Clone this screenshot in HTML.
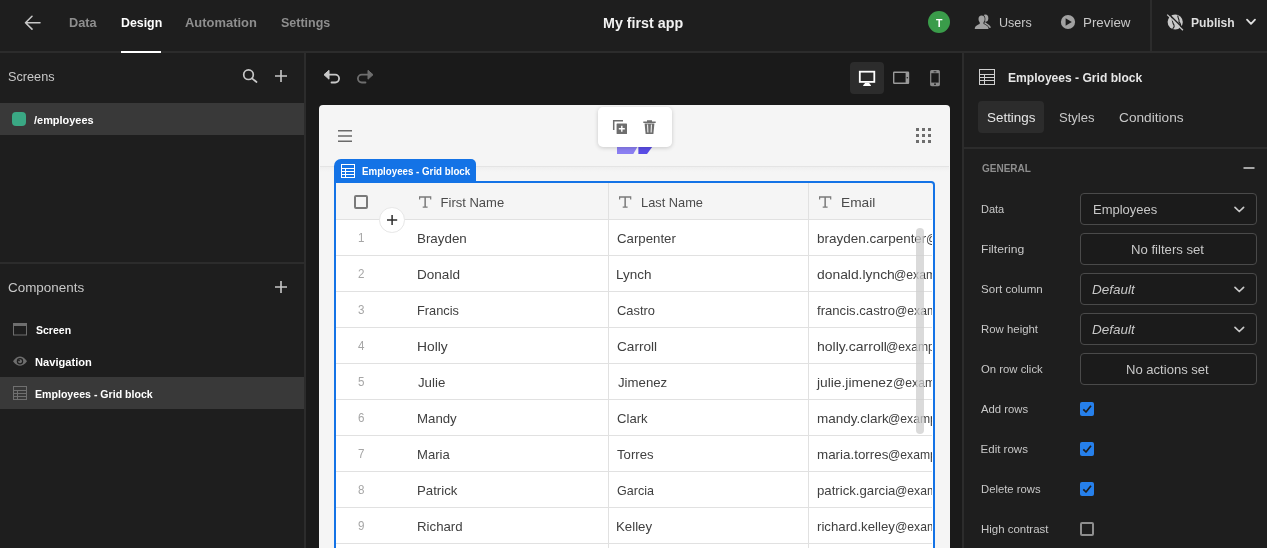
<!DOCTYPE html>
<html lang="en"><head><meta charset="utf-8"><title>My first app</title>
<style>
html,body{margin:0;padding:0;}
body{width:1267px;height:548px;overflow:hidden;background:#1a1a1a;font-family:"Liberation Sans",sans-serif;position:relative;}
div,span,svg{position:absolute;box-sizing:border-box;}
.t{white-space:pre;line-height:20px;height:20px;transform-origin:0 50%;display:block;}
#top{left:0;top:0;width:1267px;height:53px;background:#1e1e1e;border-bottom:2px solid #2c2c2c;}
#left{left:0;top:53px;width:306px;height:495px;background:#1e1e1e;border-right:2px solid #2c2c2c;}
#right{left:962px;top:53px;width:305px;height:495px;background:#1e1e1e;border-left:2px solid #2c2c2c;}
.hl{background:#393939;}
.sep{background:#2c2c2c;}
#preview{left:319px;top:105px;width:631px;height:460px;background:#f5f5f5;border-radius:4px 4px 0 0;overflow:hidden;}
.inp{left:1080px;width:177px;height:32px;border:1px solid #4a4a4a;border-radius:4px;background:#1b1b1b;}
.cb{left:1080px;width:14px;height:14px;border-radius:2px;}
.cb.on{background:#2680eb;}
.cb.off{border:2px solid #8e8e8e;}
.rowline{left:0;width:597px;height:1px;background:#e1e1e1;}
.colline{top:0;width:1px;height:400px;background:#e1e1e1;}
#texts,#grid{will-change:transform;}
#texts{left:0;top:0;width:1267px;height:548px;}

</style></head>
<body>
<div id="top"></div>
<div class="sep" style="left:1150px;top:0;width:2px;height:51px"></div>
<div style="left:121px;top:51px;width:40px;height:2px;background:#fff"></div>
<div id="left"></div>
<div class="hl" style="left:0;top:103px;width:304px;height:32px"></div>
<div style="left:12px;top:112px;width:14px;height:14px;border-radius:4px;background:#3aa884"></div>
<div class="sep" style="left:0;top:262px;width:304px;height:2px"></div>
<div class="hl" style="left:0;top:377px;width:304px;height:32px"></div>
<div id="right"></div>
<div style="left:978px;top:101px;width:66px;height:32px;border-radius:4px;background:#2c2c2c"></div>
<div class="sep" style="left:964px;top:147px;width:303px;height:2px"></div>
<div class="inp" style="top:193px"></div>
<div class="inp" style="top:233px"></div>
<div class="inp" style="top:273px"></div>
<div class="inp" style="top:313px"></div>
<div class="inp" style="top:353px"></div>
<div class="cb on" style="top:402px"></div>
<div class="cb on" style="top:442px"></div>
<div class="cb on" style="top:482px"></div>
<div class="cb off" style="top:522px"></div>
<div style="left:850px;top:62px;width:34px;height:32px;border-radius:4px;background:#2c2c2c"></div>
<div id="preview">
  <div style="left:1px;top:61px;width:629px;height:1px;background:#e4e4e4"></div>
  <div style="left:1px;top:62px;width:629px;height:5px;background:linear-gradient(#efefef,#f5f5f5)"></div>
</div>
<!-- grid -->
<div style="left:336px;top:183px;width:597px;height:36px;background:#f5f5f5"></div>
<div style="left:336px;top:219px;width:597px;height:340px;background:#fff"></div>
<div id="grid" style="left:336px;top:183px;width:596px;height:380px;overflow:hidden;background:#fff">
  <div style="left:0;top:0;width:597px;height:36px;background:#f5f5f5"></div>
  <div class="rowline" style="top:36px"></div>
  <div class="rowline" style="top:72px"></div>
  <div class="rowline" style="top:108px"></div>
  <div class="rowline" style="top:144px"></div>
  <div class="rowline" style="top:180px"></div>
  <div class="rowline" style="top:216px"></div>
  <div class="rowline" style="top:252px"></div>
  <div class="rowline" style="top:288px"></div>
  <div class="rowline" style="top:324px"></div>
  <div class="rowline" style="top:360px"></div>
  <div class="colline" style="left:272px"></div>
  <div class="colline" style="left:472px"></div>
<span class="t" style="left:21.83px;top:45.20px;font-size:12.5px;color:#a6a6a6;transform:scaleX(0.9300);">1</span>
<span class="t" style="left:80.57px;top:46.00px;font-size:13px;color:#404040;transform:scaleX(1.0280);">Brayden</span>
<span class="t" style="left:280.74px;top:46.00px;font-size:13px;color:#404040;transform:scaleX(1.0175);">Carpenter</span>
<span class="t" style="left:480.72px;top:46.00px;font-size:13px;color:#404040;transform:scaleX(1.0364);">brayden.carpenter</span>
<span class="t" style="left:589.77px;top:46.00px;font-size:13px;color:#404040;transform:scaleX(0.9350);">@example.com</span>
<span class="t" style="left:22.06px;top:81.20px;font-size:12.5px;color:#a6a6a6;transform:scaleX(0.9300);">2</span>
<span class="t" style="left:80.56px;top:82.00px;font-size:13px;color:#404040;transform:scaleX(1.0420);">Donald</span>
<span class="t" style="left:280.46px;top:82.00px;font-size:13px;color:#404040;transform:scaleX(1.0369);">Lynch</span>
<span class="t" style="left:480.97px;top:82.00px;font-size:13px;color:#404040;transform:scaleX(1.0662);">donald.lynch</span>
<span class="t" style="left:557.77px;top:82.00px;font-size:13px;color:#404040;transform:scaleX(0.9350);">@example.com</span>
<span class="t" style="left:21.94px;top:117.20px;font-size:12.5px;color:#a6a6a6;transform:scaleX(0.9300);">3</span>
<span class="t" style="left:80.62px;top:118.00px;font-size:13px;color:#404040;transform:scaleX(0.9842);">Francis</span>
<span class="t" style="left:280.76px;top:118.00px;font-size:13px;color:#404040;transform:scaleX(0.9919);">Castro</span>
<span class="t" style="left:481.25px;top:118.00px;font-size:13px;color:#404040;transform:scaleX(1.0092);">francis.castro</span>
<span class="t" style="left:558.77px;top:118.00px;font-size:13px;color:#404040;transform:scaleX(0.9350);">@example.com</span>
<span class="t" style="left:22.06px;top:153.20px;font-size:12.5px;color:#a6a6a6;transform:scaleX(0.9300);">4</span>
<span class="t" style="left:80.54px;top:154.00px;font-size:13px;color:#404040;transform:scaleX(1.0631);">Holly</span>
<span class="t" style="left:280.71px;top:154.00px;font-size:13px;color:#404040;transform:scaleX(1.0476);">Carroll</span>
<span class="t" style="left:480.69px;top:154.00px;font-size:13px;color:#404040;transform:scaleX(1.0798);">holly.carroll</span>
<span class="t" style="left:549.87px;top:154.00px;font-size:13px;color:#404040;transform:scaleX(0.9350);">@example.com</span>
<span class="t" style="left:21.94px;top:189.20px;font-size:12.5px;color:#a6a6a6;transform:scaleX(0.9300);">5</span>
<span class="t" style="left:81.85px;top:190.00px;font-size:13px;color:#404040;transform:scaleX(1.0192);">Julie</span>
<span class="t" style="left:281.55px;top:190.00px;font-size:13px;color:#404040;transform:scaleX(1.0168);">Jimenez</span>
<span class="t" style="left:481.37px;top:190.00px;font-size:13px;color:#404040;transform:scaleX(1.0611);">julie.jimenez</span>
<span class="t" style="left:556.77px;top:190.00px;font-size:13px;color:#404040;transform:scaleX(0.9350);">@example.com</span>
<span class="t" style="left:21.94px;top:225.20px;font-size:12.5px;color:#a6a6a6;transform:scaleX(0.9300);">6</span>
<span class="t" style="left:80.58px;top:226.00px;font-size:13px;color:#404040;transform:scaleX(1.0184);">Mandy</span>
<span class="t" style="left:280.74px;top:226.00px;font-size:13px;color:#404040;transform:scaleX(1.0102);">Clark</span>
<span class="t" style="left:480.72px;top:226.00px;font-size:13px;color:#404040;transform:scaleX(1.0388);">mandy.clark</span>
<span class="t" style="left:552.27px;top:226.00px;font-size:13px;color:#404040;transform:scaleX(0.9350);">@example.com</span>
<span class="t" style="left:22.06px;top:261.20px;font-size:12.5px;color:#a6a6a6;transform:scaleX(0.9300);">7</span>
<span class="t" style="left:80.59px;top:262.00px;font-size:13px;color:#404040;transform:scaleX(1.0063);">Maria</span>
<span class="t" style="left:281.25px;top:262.00px;font-size:13px;color:#404040;transform:scaleX(1.0113);">Torres</span>
<span class="t" style="left:480.73px;top:262.00px;font-size:13px;color:#404040;transform:scaleX(1.0300);">maria.torres</span>
<span class="t" style="left:551.67px;top:262.00px;font-size:13px;color:#404040;transform:scaleX(0.9350);">@example.com</span>
<span class="t" style="left:21.94px;top:297.20px;font-size:12.5px;color:#a6a6a6;transform:scaleX(0.9300);">8</span>
<span class="t" style="left:80.58px;top:298.00px;font-size:13px;color:#404040;transform:scaleX(1.0168);">Patrick</span>
<span class="t" style="left:280.78px;top:298.00px;font-size:13px;color:#404040;transform:scaleX(0.9653);">Garcia</span>
<span class="t" style="left:480.74px;top:298.00px;font-size:13px;color:#404040;transform:scaleX(1.0144);">patrick.garcia</span>
<span class="t" style="left:559.27px;top:298.00px;font-size:13px;color:#404040;transform:scaleX(0.9350);">@example.com</span>
<span class="t" style="left:21.94px;top:333.20px;font-size:12.5px;color:#a6a6a6;transform:scaleX(0.9300);">9</span>
<span class="t" style="left:80.58px;top:334.00px;font-size:13px;color:#404040;transform:scaleX(1.0186);">Richard</span>
<span class="t" style="left:280.48px;top:334.00px;font-size:13px;color:#404040;transform:scaleX(1.0190);">Kelley</span>
<span class="t" style="left:480.74px;top:334.00px;font-size:13px;color:#404040;transform:scaleX(1.0178);">richard.kelley</span>
<span class="t" style="left:558.77px;top:334.00px;font-size:13px;color:#404040;transform:scaleX(0.9350);">@example.com</span>
  <div style="left:580px;top:45px;width:8px;height:206px;border-radius:4px;background:rgba(205,205,205,.75)"></div>
</div>
<div style="left:334px;top:181px;width:601px;height:400px;border:2px solid #1473e6;border-radius:0 4px 0 0"></div>
<div style="left:334px;top:159px;width:142px;height:23px;background:#1473e6;border-radius:7px 5px 0 0"></div>
<!-- logo -->
<svg style="left:610px;top:140px" width="50" height="16" viewBox="610 140 50 16"><polygon points="617,146 637.9,146 633.3,154 617,154" fill="#8b7ff2"/><polygon points="638.4,146 652.9,146 647,154 638.4,154" fill="#5a4de6"/></svg>
<div style="left:598px;top:107px;width:74px;height:40px;background:#fff;border-radius:5px;box-shadow:0 1px 4px rgba(0,0,0,.18)"></div>
<div style="left:379.3px;top:207.2px;width:25.6px;height:25.6px;border-radius:50%;background:#fff;border:1px solid #e6e6e6"></div>
<div style="left:354px;top:195px;width:14px;height:14px;border:2px solid #7a7a7a;border-radius:2px;background:#f5f5f5"></div>
<div style="left:928px;top:11px;width:22px;height:22px;border-radius:50%;background:#3a9c4a"></div>
<!-- ICONS -->
<svg id="icons" style="left:0;top:0" width="1267" height="548" viewBox="0 0 1267 548" fill="none">
  <!-- back arrow -->
  <path d="M40 22.7H25.5M32 16.3L25.5 22.7L32 29.1" stroke="#c8c8c8" stroke-width="1.6" stroke-linecap="round" stroke-linejoin="round"/>
  <!-- search -->
  <circle cx="248.5" cy="74.7" r="4.8" stroke="#c8c8c8" stroke-width="1.7"/>
  <path d="M252 78.3L256.5 82" stroke="#c8c8c8" stroke-width="1.7" stroke-linecap="round"/>
  <!-- plus (screens) -->
  <path d="M275 76H287M281 70V82" stroke="#c8c8c8" stroke-width="1.6"/>
  <!-- plus (components) -->
  <path d="M275 287H287M281 281V293" stroke="#c8c8c8" stroke-width="1.6"/>
  <!-- undo -->
  <path d="M329 70.3L324 74.7L329 79.2Z" fill="#c8c8c8" stroke="#c8c8c8" stroke-width="1" stroke-linejoin="round"/>
  <path d="M328 74.7H335.2A3.9 3.9 0 0 1 335.2 82.5H331.5" stroke="#c8c8c8" stroke-width="1.8" stroke-linecap="round"/>
  <!-- redo -->
  <path d="M368 70.3L373 74.7L368 79.2Z" fill="#6e6e6e" stroke="#6e6e6e" stroke-width="1" stroke-linejoin="round"/>
  <path d="M369 74.7H361.8A3.9 3.9 0 0 0 361.8 82.5H365.5" stroke="#6e6e6e" stroke-width="1.8" stroke-linecap="round"/>
  <!-- desktop -->
  <rect x="859.8" y="71.7" width="14.5" height="10.2" stroke="#fff" stroke-width="1.8"/>
  <path d="M865.3 82.7H868.9L870.9 85.2V86.1H863.2V85.2Z" fill="#fff"/>
  <!-- tablet -->
  <rect x="893.7" y="72.2" width="14.8" height="11.1" rx="0.5" stroke="#9a9a9a" stroke-width="1.4"/>
  <rect x="905.6" y="72.2" width="3" height="11.1" fill="#9a9a9a"/>
  <circle cx="907.3" cy="77.8" r="0.8" fill="#1a1a1a"/>
  <!-- phone -->
  <rect x="930.7" y="70.6" width="8.6" height="15" rx="1.2" stroke="#8a8a8a" stroke-width="1.2"/>
  <rect x="930.7" y="70.6" width="8.6" height="2.6" fill="#8a8a8a"/>
  <rect x="930.7" y="82.6" width="8.6" height="3" fill="#8a8a8a"/>
  <rect x="933.6" y="71.4" width="2.8" height="0.9" fill="#1a1a1a"/><circle cx="935" cy="84.2" r="0.9" fill="#1a1a1a"/>
  <!-- users -->
  <g fill="#a2a2a2">
    <ellipse cx="985.4" cy="18.2" rx="2.9" ry="3.6"/>
    <path d="M984.5 21.5C986.5 24 990.9 24.8 990.9 27.8H989C988.4 26 986.3 25.2 984.3 24.2Z"/>
    <g stroke="#1e1e1e" stroke-width="1.4">
      <ellipse cx="981.6" cy="19" rx="3.1" ry="3.6"/>
      <path d="M974.8 29C974.8 26 977.5 25.1 979.7 24.1V22H983.5V24.1C985.7 25.1 988.5 26 988.5 29Z"/>
    </g>
    <ellipse cx="981.6" cy="19" rx="3.1" ry="3.6"/>
    <path d="M974.8 29C974.8 26 977.5 25.1 979.7 24.1V22H983.5V24.1C985.7 25.1 988.5 26 988.5 29Z"/>
  </g>
  <!-- play -->
  <circle cx="1068" cy="22" r="7.1" fill="#a2a2a2"/>
  <path d="M1065.6 18.3L1071.8 22L1065.6 25.7Z" fill="#1e1e1e"/>
  <!-- publish globe -->
  <circle cx="1175.2" cy="22" r="7.6" fill="#c8c8c8"/>
  <path d="M1171 17C1173 19 1172 23 1174 25C1175 27 1173 28.5 1172.5 29M1178 15.5C1177 18 1180 19 1179 22C1181 24 1181 26 1180 28" stroke="#1e1e1e" stroke-width="1.1"/>
  <path d="M1168.3 13.6L1184 29.3" stroke="#1e1e1e" stroke-width="1.4"/>
  <path d="M1167.2 14.6L1182.9 30.3" stroke="#c8c8c8" stroke-width="1.3"/>
  <!-- publish chevron -->
  <path d="M1247 19.6L1251 23.8L1255 19.6" stroke="#e0e0e0" stroke-width="1.8" stroke-linecap="round" stroke-linejoin="round"/>
  <!-- component icons -->
  <rect x="13.5" y="323.5" width="13" height="11.5" stroke="#6e6e6e" stroke-width="1"/>
  <rect x="13" y="323" width="14" height="3" fill="#6e6e6e"/>
  <path d="M13 361.2C15.5 357.7 18 356.6 20 356.6C22 356.6 24.5 357.7 27 361.2C24.5 364.7 22 365.8 20 365.8C18 365.8 15.5 364.7 13 361.2Z" fill="#6e6e6e"/>
  <circle cx="20" cy="361.2" r="3.2" fill="#1e1e1e"/>
  <circle cx="20" cy="361.2" r="2" fill="#6e6e6e"/>
  <circle cx="19" cy="360.4" r="0.9" fill="#1e1e1e"/>
  <g stroke="#707070" stroke-width="1">
    <rect x="13.5" y="386.5" width="13" height="13"/>
    <path d="M13.5 390.5H26.5M13.5 393.5H26.5M13.5 396.5H26.5M17.5 390.5V399.5"/>
  </g>
  <!-- right title icon -->
  <g stroke="#d0d0d0" stroke-width="1">
    <rect x="979.5" y="69.5" width="15" height="15"/>
    <path d="M979.5 74.5H994.5M979.5 77.5H994.5M979.5 80.5H994.5M984.5 74.5V84.5"/>
  </g>
  <!-- minus -->
  <path d="M1243.5 168H1254.5" stroke="#c8c8c8" stroke-width="1.6"/>
  <!-- select chevrons -->
  <g stroke="#c8c8c8" stroke-width="1.7" stroke-linecap="round" stroke-linejoin="round">
    <path d="M1235 207.3L1239.3 211.5L1243.6 207.3"/>
    <path d="M1235 287.3L1239.3 291.5L1243.6 287.3"/>
    <path d="M1235 327.3L1239.3 331.5L1243.6 327.3"/>
  </g>
  <!-- check marks -->
  <g stroke="#1e1e1e" stroke-width="1.7" stroke-linejoin="round">
    <path d="M1083.3 409.3L1086 412L1091 405.8"/>
    <path d="M1083.3 449.3L1086 452L1091 445.8"/>
    <path d="M1083.3 489.3L1086 492L1091 485.8"/>
  </g>
  <!-- preview: hamburger -->
  <path d="M338 130.7H352M338 136H352M338 141.3H352" stroke="#6a6a6a" stroke-width="1.6"/>
  <!-- preview: dots -->
  <g fill="#6e6e6e">
    <rect x="916" y="128" width="3" height="3"/><rect x="922" y="128" width="3" height="3"/><rect x="928" y="128" width="3" height="3"/>
    <rect x="916" y="134" width="3" height="3"/><rect x="922" y="134" width="3" height="3"/><rect x="928" y="134" width="3" height="3"/>
    <rect x="916" y="140" width="3" height="3"/><rect x="922" y="140" width="3" height="3"/><rect x="928" y="140" width="3" height="3"/>
  </g>
  <!-- duplicate -->
  <path d="M613.7 130V120.7H623" stroke="#6e6e6e" stroke-width="1.5"/>
  <rect x="616.6" y="123.4" width="10.4" height="10.6" rx="0.6" fill="#6e6e6e"/>
  <path d="M618.8 128.7H624.8M621.8 125.7V131.7" stroke="#fff" stroke-width="1.4"/>
  <!-- trash -->
  <path d="M643.3 122.2H655.7M647 121H652" stroke="#6e6e6e" stroke-width="1.4"/>
  <path d="M644.6 123.5H654.4L653.4 134H645.6Z" fill="#6e6e6e"/>
  <path d="M647.6 124.5L647.9 132.5M651.4 124.5L651.1 132.5" stroke="#fff" stroke-width="1"/>
  <!-- label table icon -->
  <g stroke="#fff" stroke-width="1">
    <rect x="341.5" y="164.5" width="13" height="13"/>
    <path d="M341.5 168.5H354.5M341.5 171.5H354.5M341.5 174.5H354.5M345.5 168.5V177.5"/>
  </g>
  <!-- T icons -->
  <g fill="#7a7a7a">
    <path id="ticon" d="M419 196.3H431.3V199.6H430.1V197.7H425.9V206.6H427.6V207.8H422.7V206.6H424.4V197.7H420.2V199.6H419Z"/>
    <path d="M619 196.3H631.3V199.6H630.1V197.7H625.9V206.6H627.6V207.8H622.7V206.6H624.4V197.7H620.2V199.6H619Z"/>
    <path d="M819 196.3H831.3V199.6H830.1V197.7H825.9V206.6H827.6V207.8H822.7V206.6H824.4V197.7H820.2V199.6H819Z"/>
  </g>
  <!-- add-row plus -->
  <path d="M387 220H397.2M392.1 214.9V225.1" stroke="#2c2c2c" stroke-width="1.5"/>
</svg>

<div id="texts">
<span class="t" style="left:68.77px;top:13.00px;font-size:13px;color:#8e8e8e;transform:scaleX(0.9782);font-weight:700;">Data</span>
<span class="t" style="left:120.79px;top:13.00px;font-size:13px;color:#ffffff;transform:scaleX(0.9509);font-weight:700;">Design</span>
<span class="t" style="left:185.05px;top:13.00px;font-size:13px;color:#8e8e8e;transform:scaleX(0.9951);font-weight:700;">Automation</span>
<span class="t" style="left:280.72px;top:13.00px;font-size:13px;color:#8e8e8e;transform:scaleX(0.9612);font-weight:700;">Settings</span>
<span class="t" style="left:602.72px;top:12.80px;font-size:14.5px;color:#f2f2f2;transform:scaleX(0.9843);font-weight:700;">My first app</span>
<span class="t" style="left:935.88px;top:12.50px;font-size:10.5px;color:#ffffff;transform:scaleX(1.0000);font-weight:700;">T</span>
<span class="t" style="left:999.13px;top:13.00px;font-size:13px;color:#c8c8c8;transform:scaleX(0.9662);">Users</span>
<span class="t" style="left:1082.97px;top:13.00px;font-size:13px;color:#c8c8c8;transform:scaleX(1.0276);">Preview</span>
<span class="t" style="left:1191.30px;top:13.00px;font-size:13px;color:#dedede;transform:scaleX(0.9319);font-weight:700;">Publish</span>
<span class="t" style="left:7.67px;top:66.50px;font-size:13px;color:#c8c8c8;transform:scaleX(0.9763);">Screens</span>
<span class="t" style="left:34.10px;top:109.80px;font-size:11px;color:#ffffff;transform:scaleX(0.9950);font-weight:700;">/employees</span>
<span class="t" style="left:7.53px;top:277.50px;font-size:13px;color:#c8c8c8;transform:scaleX(1.0331);">Components</span>
<span class="t" style="left:35.76px;top:320.10px;font-size:11px;color:#ffffff;transform:scaleX(0.9566);font-weight:700;">Screen</span>
<span class="t" style="left:35.24px;top:351.90px;font-size:11px;color:#ffffff;transform:scaleX(1.0100);font-weight:700;">Navigation</span>
<span class="t" style="left:35.28px;top:383.90px;font-size:11px;color:#ffffff;transform:scaleX(0.9630);font-weight:700;">Employees - Grid block</span>
<span class="t" style="left:361.87px;top:162.00px;font-size:10px;color:#ffffff;transform:scaleX(0.9732);font-weight:700;">Employees - Grid block</span>
<span class="t" style="left:440.60px;top:193.00px;font-size:13px;color:#4b4b4b;transform:scaleX(1.0000);">First Name</span>
<span class="t" style="left:640.61px;top:193.00px;font-size:13px;color:#4b4b4b;transform:scaleX(0.9861);">Last Name</span>
<span class="t" style="left:840.55px;top:193.00px;font-size:13px;color:#4b4b4b;transform:scaleX(1.0537);">Email</span>
<span class="t" style="left:1007.80px;top:67.50px;font-size:13px;color:#e6e6e6;transform:scaleX(0.9287);font-weight:700;">Employees - Grid block</span>
<span class="t" style="left:986.53px;top:108.20px;font-size:13px;color:#e6e6e6;transform:scaleX(1.0317);">Settings</span>
<span class="t" style="left:1058.95px;top:108.20px;font-size:13px;color:#c8c8c8;transform:scaleX(1.0044);">Styles</span>
<span class="t" style="left:1118.61px;top:108.20px;font-size:13px;color:#c8c8c8;transform:scaleX(1.0523);">Conditions</span>
<span class="t" style="left:982.35px;top:157.90px;font-size:11px;color:#8e8e8e;transform:scaleX(0.9094);font-weight:700;">GENERAL</span>
<span class="t" style="left:980.85px;top:199.40px;font-size:11.5px;color:#c8c8c8;transform:scaleX(0.9548);">Data</span>
<span class="t" style="left:980.75px;top:239.20px;font-size:11.5px;color:#c8c8c8;transform:scaleX(1.0548);">Filtering</span>
<span class="t" style="left:981.30px;top:279.10px;font-size:11.5px;color:#c8c8c8;transform:scaleX(1.0058);">Sort column</span>
<span class="t" style="left:980.81px;top:319.00px;font-size:11.5px;color:#c8c8c8;transform:scaleX(0.9912);">Row height</span>
<span class="t" style="left:981.11px;top:359.20px;font-size:11.5px;color:#c8c8c8;transform:scaleX(0.9855);">On row click</span>
<span class="t" style="left:980.90px;top:399.00px;font-size:11.5px;color:#c8c8c8;transform:scaleX(0.9832);">Add rows</span>
<span class="t" style="left:980.60px;top:439.00px;font-size:11.5px;color:#c8c8c8;transform:scaleX(1.0000);">Edit rows</span>
<span class="t" style="left:980.62px;top:479.00px;font-size:11.5px;color:#c8c8c8;transform:scaleX(0.9806);">Delete rows</span>
<span class="t" style="left:980.61px;top:518.60px;font-size:11.5px;color:#c8c8c8;transform:scaleX(0.9948);">High contrast</span>
<span class="t" style="left:1092.60px;top:200.30px;font-size:13px;color:#c8c8c8;transform:scaleX(0.9992);">Employees</span>
<span class="t" style="left:1130.99px;top:240.20px;font-size:13px;color:#c8c8c8;transform:scaleX(1.0105);">No filters set</span>
<span class="t" style="left:1092.48px;top:280.10px;font-size:13px;color:#c8c8c8;transform:scaleX(1.0366);font-style:italic;">Default</span>
<span class="t" style="left:1092.48px;top:320.00px;font-size:13px;color:#c8c8c8;transform:scaleX(1.0366);font-style:italic;">Default</span>
<span class="t" style="left:1126.40px;top:360.20px;font-size:13px;color:#c8c8c8;transform:scaleX(1.0043);">No actions set</span>
</div>
</body></html>
